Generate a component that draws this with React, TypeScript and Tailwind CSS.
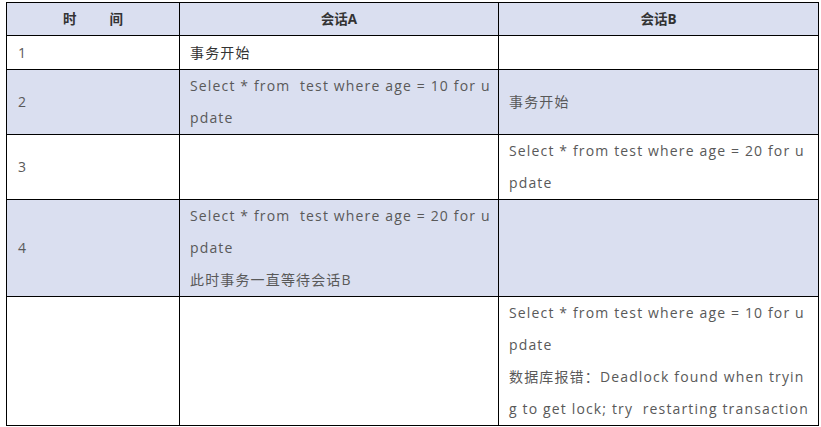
import React from "react";

interface Row {
  time: string;
  a: string[];
  b: string[];
  shaded: boolean;
  height: string;
}

const rows: Row[] = [
  { time: "1", a: ["事务开始"], b: [], shaded: false, height: "h-[34px]" },
  {
    time: "2",
    a: ["Select * from  test where age = 10 for u", "pdate"],
    b: ["事务开始"],
    shaded: true,
    height: "h-[65px]",
  },
  {
    time: "3",
    a: [],
    b: ["Select * from test where age = 20 for u", "pdate"],
    shaded: false,
    height: "h-[65px]",
  },
  {
    time: "4",
    a: ["Select * from  test where age = 20 for u", "pdate", "此时事务一直等待会话B"],
    b: [],
    shaded: true,
    height: "h-[97px]",
  },
  {
    time: "",
    a: [],
    b: [
      "Select * from test where age = 10 for u",
      "pdate",
      "数据库报错：Deadlock found when tryin",
      "g to get lock; try  restarting transaction",
    ],
    shaded: false,
    height: "h-[129px]",
  },
];

function Lines({ lines }: { lines: string[] }) {
  return (
    <>
      {lines.map((line, i) => (
        <div key={i} className="whitespace-pre">
          {line}
        </div>
      ))}
    </>
  );
}

export default function App() {
  return (
    <div className="min-h-screen bg-white pl-[6px] pt-[2px] font-['Open_Sans','Noto_Sans_CJK_SC',sans-serif]">
      <table className="table-fixed border-collapse w-[812px] text-[14px] leading-[32px] tracking-[1.15px] text-[#595959]">
        <colgroup>
          <col className="w-[173px]" />
          <col className="w-[319px]" />
          <col className="w-[320px]" />
        </colgroup>
        <thead>
          <tr className="h-[33px] bg-[#dadff0] text-[13.5px] tracking-normal font-bold text-[#333]">
            <th className="border border-black px-[10px] align-middle">
              <span className="inline-flex gap-[33px]">
                <span>时</span>
                <span>间</span>
              </span>
            </th>
            <th className="border border-black px-[10px] align-middle">会话A</th>
            <th className="border border-black px-[10px] align-middle">会话B</th>
          </tr>
        </thead>
        <tbody>
          {rows.map((row, i) => (
            <tr key={i} className={`${row.height} ${row.shaded ? "bg-[#dadff0]" : "bg-white"}`}>
              <td className="border border-black pl-[11px] pr-[10px] align-middle">{row.time}</td>
              <td className={`border border-black px-[10px] align-middle ${i === 0 ? "text-[#333]" : ""}`}>
                <Lines lines={row.a} />
              </td>
              <td className="border border-black px-[10px] align-middle">
                <Lines lines={row.b} />
              </td>
            </tr>
          ))}
        </tbody>
      </table>
    </div>
  );
}
